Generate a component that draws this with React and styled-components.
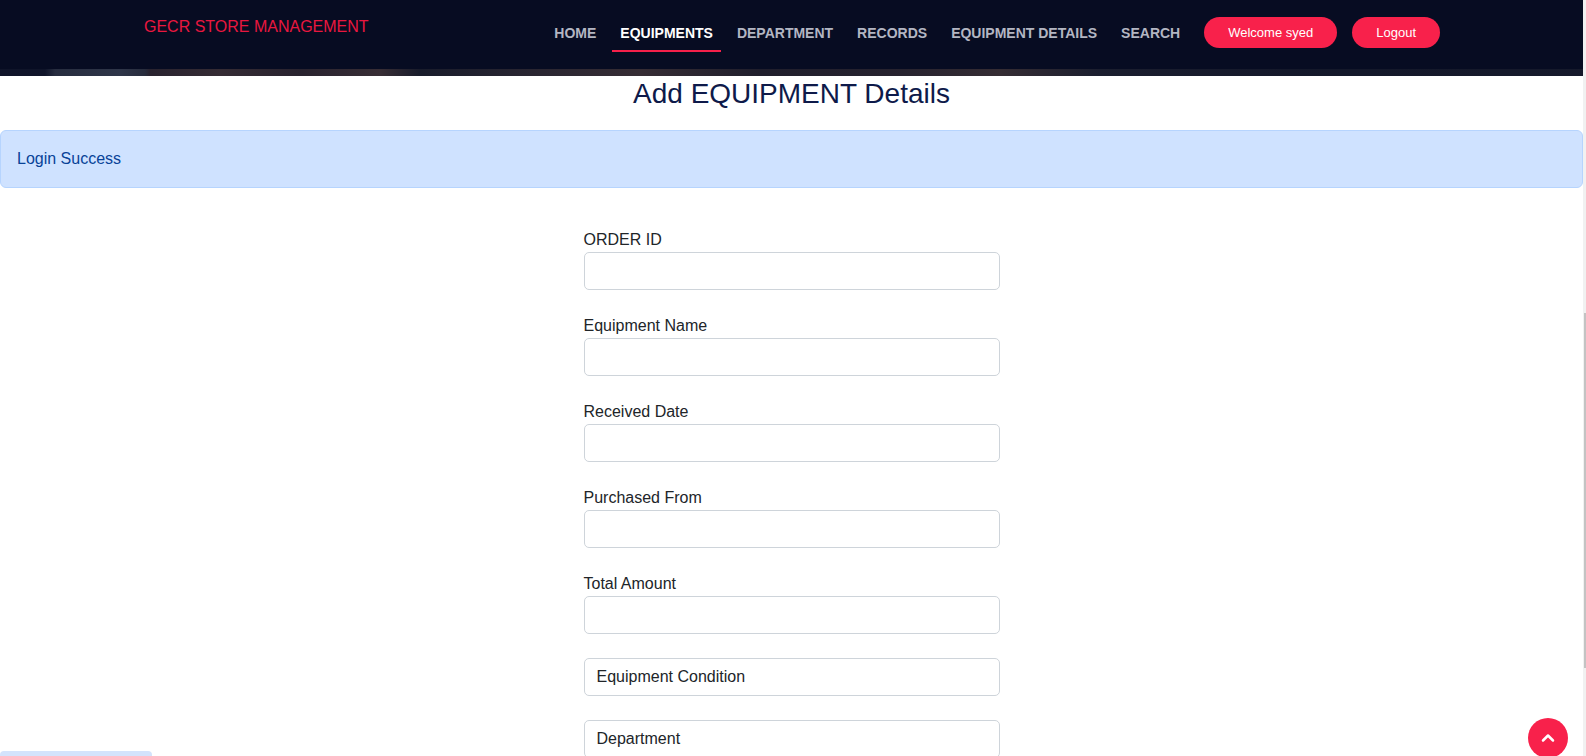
import styled, { createGlobalStyle } from 'styled-components';
import { ChevronUp } from 'lucide-react';

const GlobalStyle = createGlobalStyle`
    html, body {
        margin: 0;
        padding: 0;
        height: 756px;
        overflow: hidden;
        background: #fff;
        font-family: "Liberation Sans", Arial, sans-serif;
    }
    * {
        box-sizing: border-box;
    }
`;

const navLinks = ['HOME', 'EQUIPMENTS', 'DEPARTMENT', 'RECORDS', 'EQUIPMENT DETAILS', 'SEARCH'];

const fields = ['ORDER ID', 'Equipment Name', 'Received Date', 'Purchased From', 'Total Amount'];

const selects = ['Equipment Condition', 'Department'];

const App = () => {
    return (
        <Page>
            <GlobalStyle />
            <Main>
                <Header>
                    <HeaderBar>
                        <Brand>GECR STORE MANAGEMENT</Brand>
                        <Nav>
                            <NavList>
                                {navLinks.map((link) => (
                                    <NavLink key={link} $active={link === 'EQUIPMENTS'}>{link}</NavLink>
                                ))}
                            </NavList>
                            <PillButton>Welcome syed</PillButton>
                            <PillButton>Logout</PillButton>
                        </Nav>
                    </HeaderBar>
                    <PhotoStrip />
                </Header>

                <Title>Add EQUIPMENT Details</Title>

                <Alert>Login Success</Alert>

                <Form>
                    {fields.map((field) => (
                        <Field key={field}>
                            <Label>{field}</Label>
                            <Input type="text" />
                        </Field>
                    ))}
                    {selects.map((item) => (
                        <SelectBox key={item}>{item}</SelectBox>
                    ))}
                </Form>
            </Main>
            <ScrollTrack>
                <ScrollThumb />
            </ScrollTrack>

            <ToastPeek />
            <ScrollTopButton aria-label="Back to top">
                <ChevronUp size={20} strokeWidth={3} color="#fff" />
            </ScrollTopButton>
        </Page>
    );
};

const Page = styled.div`
    display: flex;
    width: 1586px;
    height: 756px;
    overflow: hidden;
`;

const Main = styled.main`
    flex: 1;
    min-width: 0;
    display: flex;
    flex-direction: column;
`;

const Header = styled.header`
    display: flex;
    flex-direction: column;
    background-color: #070c22;
`;

const HeaderBar = styled.div`
    display: flex;
    justify-content: space-between;
    align-items: flex-start;
    height: 69px;
    padding: 0 143px 0 144px;
`;

const Brand = styled.div`
    padding-top: 18px;
    font-size: 16px;
    line-height: 18px;
    color: #e9173f;
`;

const Nav = styled.nav`
    display: flex;
    align-items: center;
    gap: 15px;
    height: 64px;
`;

const NavList = styled.div`
    display: flex;
    align-items: center;
    gap: 8px;
    margin-right: 1px;
`;

const NavLink = styled.a`
    display: block;
    padding: 12px 8px 7px;
    font-size: 14px;
    line-height: 19px;
    font-weight: bold;
    color: ${(props) => (props.$active ? '#ffffff' : '#b3b6c2')};
    border-bottom: 2px solid ${(props) => (props.$active ? '#f5204a' : 'transparent')};
    cursor: pointer;
    white-space: nowrap;
`;

const PillButton = styled.button`
    height: 31px;
    padding: 0 24px;
    border: none;
    border-radius: 16px;
    background-color: #f8214b;
    color: #fff;
    font-family: "Liberation Sans", Arial, sans-serif;
    font-size: 13px;
    font-weight: 500;
    cursor: pointer;
`;

const PhotoStrip = styled.div`
    height: 7px;
    background:
        linear-gradient(90deg,
            #10152a 0, #10152a 45px,
            #2a3042 55px, #333a4d 120px, #2b3040 145px,
            #2c2530 150px, #3a2f36 220px, #2c2530 300px, #3d3137 380px,
            #1a1d2c 420px, #2b2732 520px, #3b3036 640px, #22202d 760px,
            #2a2530 900px, #3a3035 1000px, #1d2030 1100px, #15192b 1300px,
            #171b2c 1583px);
    opacity: 0.9;
`;

const Title = styled.h1`
    margin: 0;
    padding-top: 1px;
    font-size: 28px;
    line-height: 33px;
    font-weight: 400;
    text-align: center;
    color: #0e1a4a;
`;

const Alert = styled.div`
    margin-top: 20px;
    padding: 16px;
    font-size: 16px;
    line-height: 24px;
    color: #084298;
    background-color: #cfe2ff;
    border: 1px solid #b6d4fe;
    border-radius: 6px;
`;

const Form = styled.form`
    display: flex;
    flex-direction: column;
    width: 416px;
    margin: 40px auto 0;
`;

const Field = styled.div`
    display: flex;
    flex-direction: column;
    margin-bottom: 24px;
`;

const Label = styled.label`
    font-size: 16px;
    line-height: 24px;
    color: #212529;
`;

const Input = styled.input`
    height: 38px;
    padding: 6px 12px;
    border: 1px solid #ced4da;
    border-radius: 5px;
    font-size: 16px;
    font-family: inherit;
    background: #fff;
`;

const SelectBox = styled.div`
    height: 38px;
    margin-bottom: 24px;
    padding: 6px 12px;
    border: 1px solid #ced4da;
    border-radius: 5px;
    font-size: 16px;
    line-height: 24px;
    color: #212529;
    background: #fff;
`;

const ScrollTrack = styled.div`
    width: 3px;
    padding: 313px 0 0 1px;
    background-color: #f1f1f1;
`;

const ScrollThumb = styled.div`
    width: 2px;
    height: 355px;
    background-color: #c3c3c3;
`;

const ToastPeek = styled.div`
    position: fixed;
    left: 0;
    top: 751px;
    width: 152px;
    height: 30px;
    background-color: #d3e3fc;
    border-radius: 4px;
`;

const ScrollTopButton = styled.button`
    position: fixed;
    left: 1528px;
    top: 718px;
    width: 40px;
    height: 40px;
    display: flex;
    align-items: center;
    justify-content: center;
    padding: 0;
    border: none;
    border-radius: 50%;
    background-color: #f8214b;
    cursor: pointer;
`;

export default App;
